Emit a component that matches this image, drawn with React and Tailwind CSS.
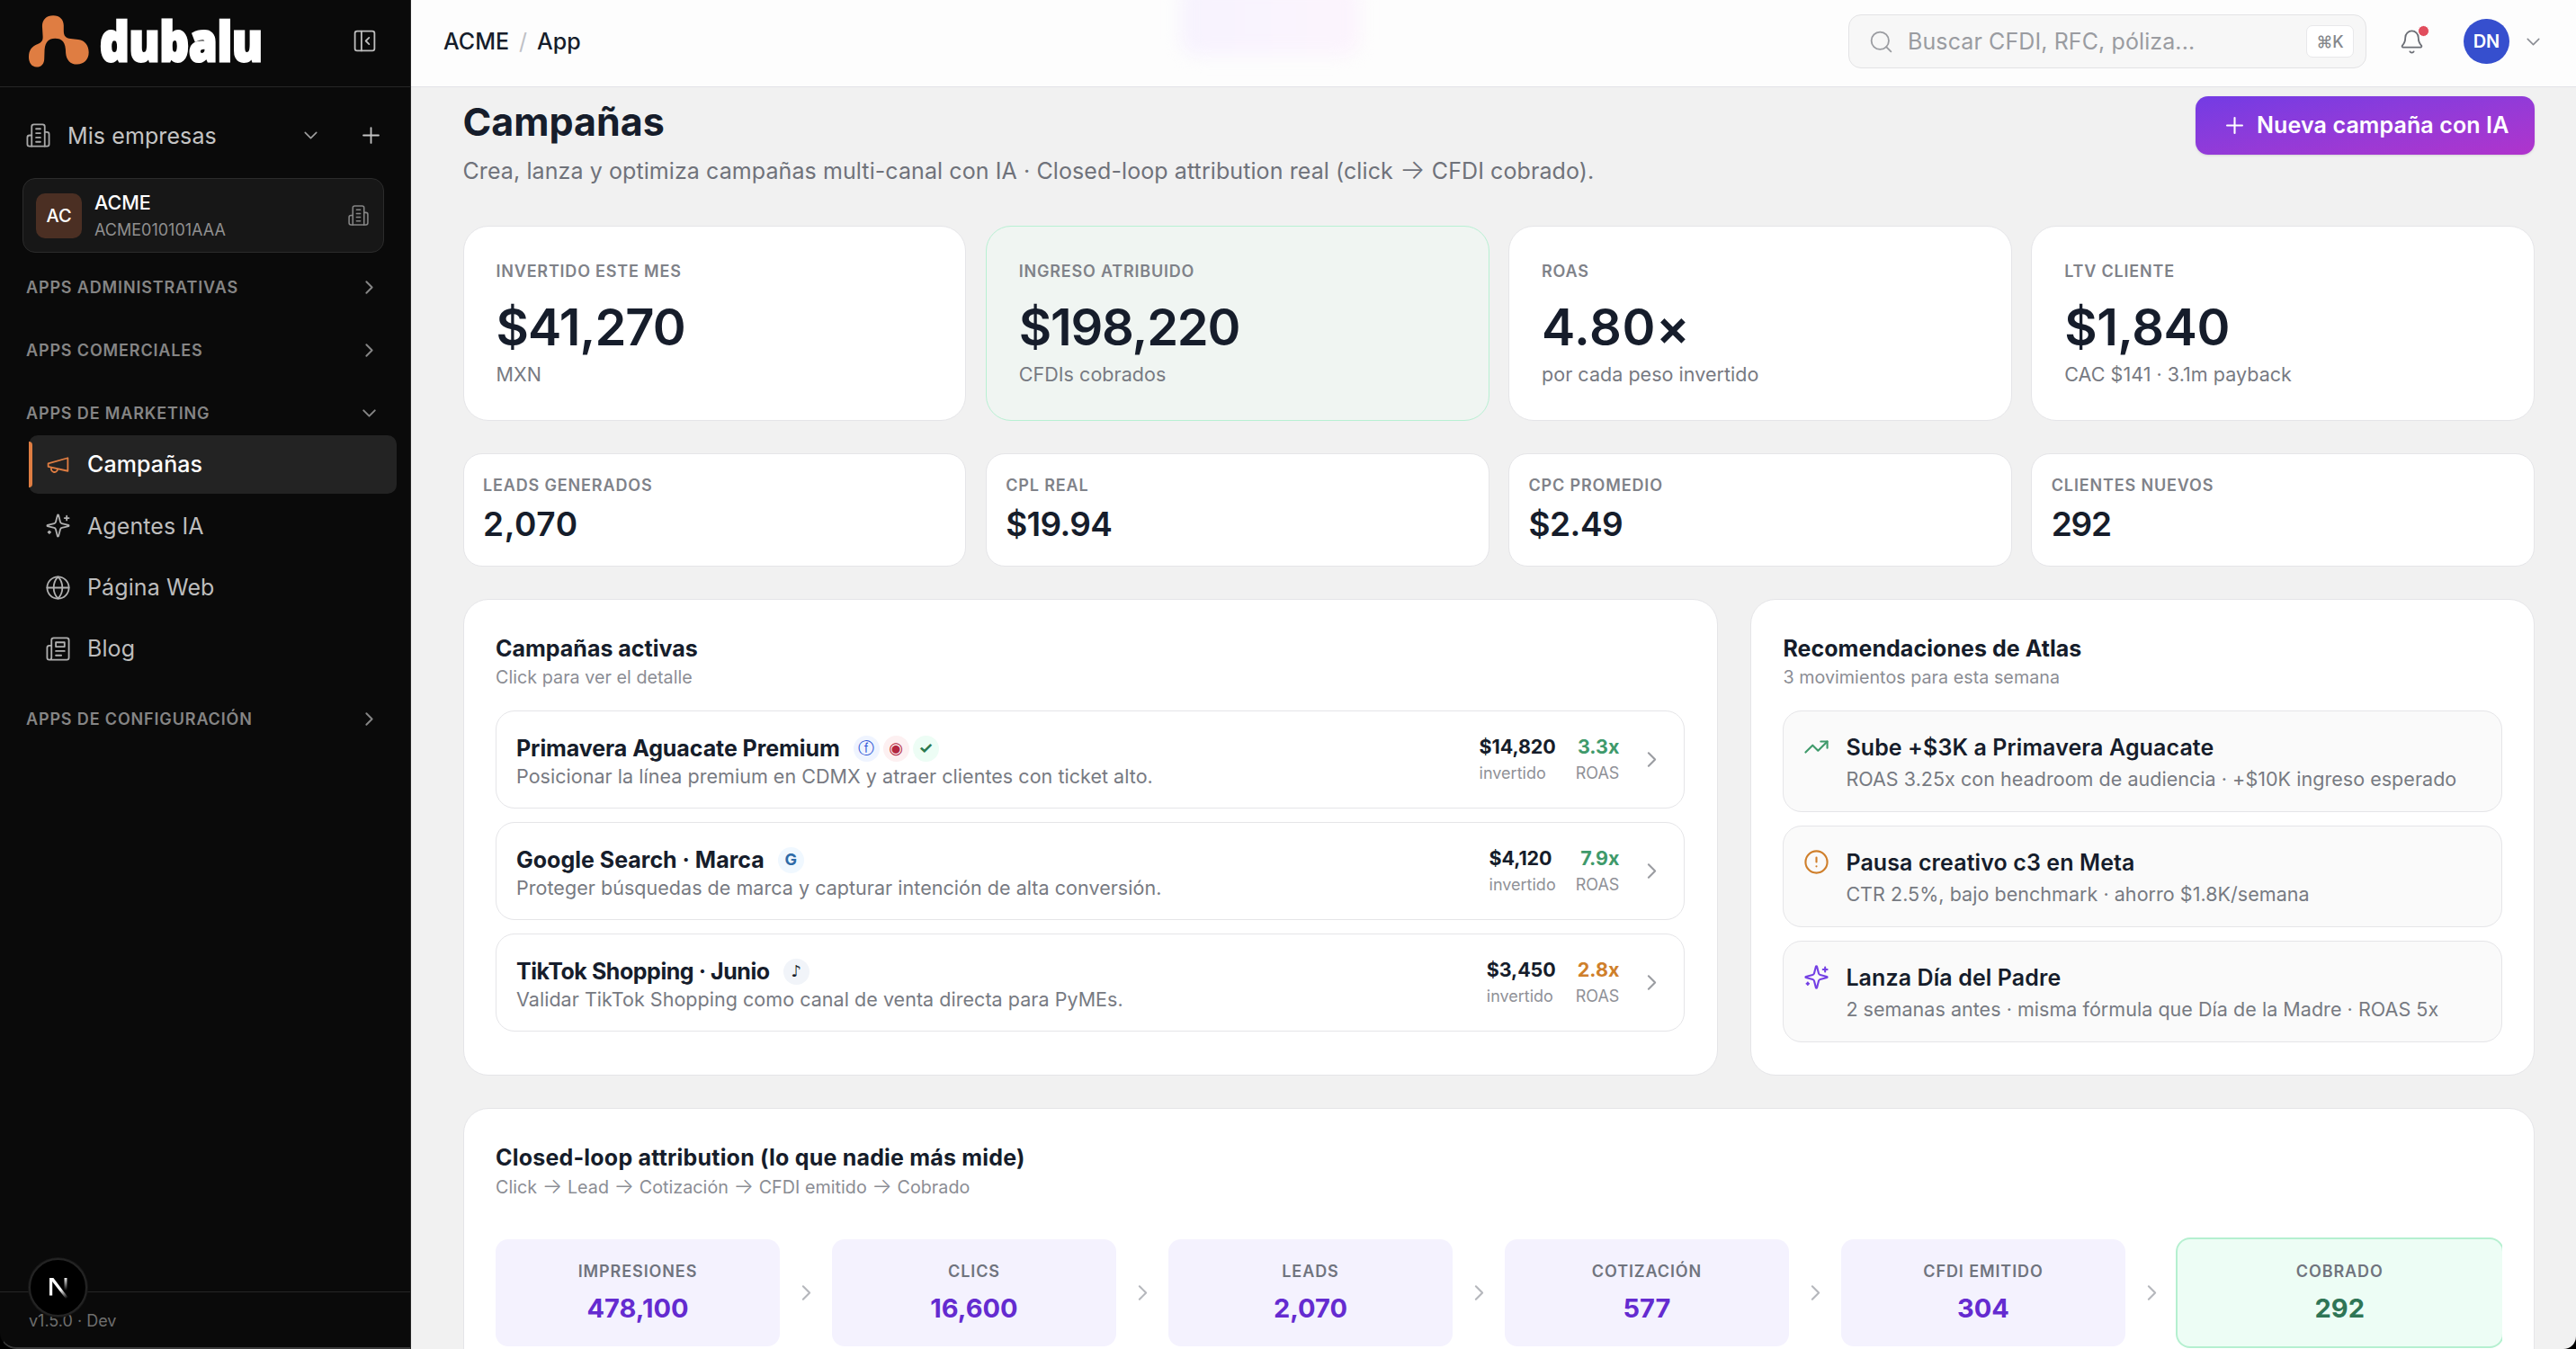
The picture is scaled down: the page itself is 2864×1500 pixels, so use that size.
import { Bell, ChevronDown, ChevronRight, CircleAlert, Globe, Plus, Search, TrendingUp } from 'lucide-react';

/* Icons */
function Icon({ children, className, strokeWidth = 1.5 }) {
  return (
    <svg
      viewBox="0 0 24 24"
      fill="none"
      stroke="currentColor"
      strokeWidth={strokeWidth}
      strokeLinecap="round"
      strokeLinejoin="round"
      className={className}
    >
      {children}
    </svg>
  );
}

function BuildingIcon(props) {
  return (
    <Icon {...props}>
      <path d="M6 22V4a2 2 0 0 1 2-2h8a2 2 0 0 1 2 2v18Z" />
      <path d="M6 12H4a2 2 0 0 0-2 2v6a2 2 0 0 0 2 2h2" />
      <path d="M18 9h2a2 2 0 0 1 2 2v9a2 2 0 0 1-2 2h-2" />
      <path d="M10 6h4M10 10h4M10 14h4M10 18h4" />
    </Icon>
  );
}

function MegaphoneIcon(props) {
  return (
    <Icon {...props}>
      <path d="m3 11 18-5v12L3 14v-3z" />
      <path d="M11.6 16.8a3 3 0 1 1-5.8-1.6" />
    </Icon>
  );
}

function SparklesIcon(props) {
  return (
    <Icon {...props}>
      <path d="M9.937 15.5A2 2 0 0 0 8.5 14.063l-6.135-1.582a.5.5 0 0 1 0-.962L8.5 9.936A2 2 0 0 0 9.937 8.5l1.582-6.135a.5.5 0 0 1 .963 0L14.063 8.5A2 2 0 0 0 15.5 9.937l6.135 1.581a.5.5 0 0 1 0 .964L15.5 14.063a2 2 0 0 0-1.437 1.437l-1.582 6.135a.5.5 0 0 1-.963 0z" />
      <path d="M20 3v4M22 5h-4M4 17v2M5 18H3" />
    </Icon>
  );
}

function NewspaperIcon(props) {
  return (
    <Icon {...props}>
      <path d="M4 22h16a2 2 0 0 0 2-2V4a2 2 0 0 0-2-2H8a2 2 0 0 0-2 2v16a2 2 0 0 1-2 2Zm0 0a2 2 0 0 1-2-2v-9c0-1.1.9-2 2-2h2" />
      <path d="M18 14h-8M15 18h-5M10 6h8v4h-8V6Z" />
    </Icon>
  );
}

function PanelCloseIcon(props) {
  return (
    <Icon {...props}>
      <rect width="18" height="18" x="3" y="3" rx="2" />
      <path d="M9 3v18M16 15l-3-3 3-3" />
    </Icon>
  );
}

function Logo() {
  return (
    <div className="flex items-start">
      <svg viewBox="36 36 202 174" className="mt-[17px] h-[58px] w-[67px]">
        <path
          fill="#df7d42"
          d="M118 36C140 36 153 50 153 70V88C153 104 160 112 176 114L202 117C225 120 237 138 237 160C237 185 220 200 198 200C175 200 162 185 160 162C160 125 148 113 124 113C102 113 92 125 89 150L88 180C88 198 78 209 62 209C46 209 36 195 36 176C36 152 46 140 66 132C80 126 84 120 83 105L81 72C81 50 95 36 118 36Z"
        />
      </svg>
      <svg className="ml-[9px] h-[92px] w-[240px] overflow-visible">
        <text
          x="3"
          y="68"
          textLength="181"
          lengthAdjust="spacingAndGlyphs"
          fill="#fff"
          stroke="#fff"
          strokeWidth="3"
          className="font-['Open_Sans'] text-[61px] font-extrabold"
        >
          dubalu
        </text>
      </svg>
    </div>
  );
}

/* Sidebar */
const marketingApps = [
  { name: 'Campañas', icon: MegaphoneIcon, active: true },
  { name: 'Agentes IA', icon: SparklesIcon },
  { name: 'Página Web', icon: Globe },
  { name: 'Blog', icon: NewspaperIcon },
];

function SectionHeader({ children, open, className }) {
  const Chevron = open ? ChevronDown : ChevronRight;
  return (
    <div className={`flex h-12 items-center justify-between pr-[33px] pl-[29px] text-[#858585] ${className}`}>
      <span className="text-[18px] font-semibold tracking-[0.85px]">{children}</span>
      <Chevron className="h-[25px] w-[25px]" strokeWidth={1.9} />
    </div>
  );
}

function Sidebar() {
  return (
    <aside className="relative flex w-[457px] shrink-0 flex-col overflow-hidden rounded-bl-[18px] border-r border-[#262626] bg-[#0a0a0a]">
      <div className="flex h-[97px] shrink-0 items-start border-b border-[#262626] pl-[32px]">
        <Logo />
        <PanelCloseIcon className="ml-[43px] mt-[31px] h-[29px] w-[29px] text-[#bdbdbd]" />
      </div>

      <div className="mt-[21px] flex h-[65px] items-center pr-[29px] pl-[28px] text-[#c4c4c4]">
        <BuildingIcon className="h-[29px] w-[29px] text-[#a8a8a8]" />
        <span className="mt-[2px] ml-[18px] flex-1 text-[25px] tracking-[0.1px]">Mis empresas</span>
        <ChevronDown className="h-[25px] w-[25px] text-[#a0a0a0]" strokeWidth={1.5} />
        <Plus className="ml-[40px] h-[29px] w-[29px]" strokeWidth={1.5} />
      </div>

      <div className="mt-[15px] ml-[25px] flex h-[83px] w-[402px] items-center rounded-[14px] border border-[#2c2c2c] bg-[#171717] pr-[15px] pl-[14px]">
        <div className="flex h-[50px] w-[51px] items-center justify-center rounded-[10px] bg-[#4b2f23] text-[20px] font-medium text-white">
          AC
        </div>
        <div className="ml-[14px] flex-1">
          <div className="mt-[2px] text-[21.5px] leading-[30px] font-medium text-white">ACME</div>
          <div className="text-[18px] leading-[31px] text-[#8f8f8f]">ACME010101AAA</div>
        </div>
        <BuildingIcon className="h-[25px] w-[25px] text-[#858585]" />
      </div>

      <SectionHeader className="mt-[14px]">APPS ADMINISTRATIVAS</SectionHeader>
      <SectionHeader className="mt-[22px]">APPS COMERCIALES</SectionHeader>
      <SectionHeader className="mt-[22px]" open>APPS DE MARKETING</SectionHeader>

      <nav className="mt-px mr-[15px] ml-[32px] flex flex-col gap-[3.4px]">
        {marketingApps.map(({ name, icon: ItemIcon, active }) => (
          <div
            key={name}
            className={`relative flex h-[65px] items-center rounded-[10px] pl-[18px] text-[25px] tracking-[0.1px] ${
              active ? 'bg-[#232323] font-medium text-white' : 'text-[#bdbdbd]'
            }`}
          >
            {active && <span className="absolute left-0 h-[51px] w-1 rounded-r bg-[#df7d42]" />}
            <ItemIcon
              className={`h-[29px] w-[29px] ${active ? 'text-[#df7d42]' : 'text-[#b0b0b0]'}`}
              strokeWidth={1.5}
            />
            <span className="mt-px ml-[18px]">{name}</span>
          </div>
        ))}
      </nav>

      <SectionHeader className="mt-[21px]">APPS DE CONFIGURACIÓN</SectionHeader>

      <div className="mt-auto h-[64px] border-t border-[#262626] pt-[17px] pl-[32px] text-[18px] leading-[30px] text-[#6e6e6e]">
        v1.5.0 · Dev
      </div>
      <div className="absolute inset-x-0 bottom-0 h-[30px] rounded-bl-[18px] border-b-2 border-l border-[#3a3a3a] border-l-transparent" />

      {/* Dev tools badge */}
      <div className="absolute bottom-[36px] left-[32px] flex h-[65px] w-[65px] items-center justify-center rounded-full border-2 border-[#242424] bg-black shadow-[0_0_0_1px_#171717]">
        <svg viewBox="0 0 24 28" className="h-[28px] w-[24px]" fill="none">
          <defs>
            <linearGradient id="diag" x1="14" y1="16" x2="21" y2="26" gradientUnits="userSpaceOnUse">
              <stop stopColor="#fff" />
              <stop offset="1" stopColor="#fff" stopOpacity="0" />
            </linearGradient>
            <linearGradient id="stem" x1="0" y1="2" x2="0" y2="17" gradientUnits="userSpaceOnUse">
              <stop stopColor="#fff" />
              <stop offset="1" stopColor="#fff" stopOpacity="0" />
            </linearGradient>
          </defs>
          <path d="M2 3h4.4L23 25l-2.2 2L2 3Z" fill="url(#diag)" />
          <path d="M3.6 22.5V3" stroke="#fff" strokeWidth="3.2" />
          <rect x="18.5" y="3" width="3" height="14" fill="url(#stem)" />
        </svg>
      </div>
    </aside>
  );
}

/* Top bar */
function Header() {
  return (
    <header className="relative flex h-[97px] shrink-0 items-center justify-between overflow-hidden border-b border-[#e3e3e8] bg-[#fdfdfd] pr-[35px] pb-[4px] pl-[36px]">
      <div className="absolute top-[-20px] left-[855px] h-[82px] w-[200px] rounded-[20px] bg-linear-to-r from-[#f7f3fe] to-[#fcf4fd] blur-[9px]" />
      <div className="mt-[2px] flex items-center text-[25px] font-medium text-[#161d2b]">
        <span>ACME</span>
        <span className="mx-[11px] font-normal text-[#bfc1c6]">/</span>
        <span>App</span>
      </div>
      <div className="flex items-center">
        <div className="flex h-[60px] w-[576px] items-center rounded-[14px] border border-[#e3e3e5] bg-[#f7f7f7] pr-[13px] pl-[21px] text-[#9a9ca1]">
          <Search className="h-[29px] w-[29px]" strokeWidth={1.5} />
          <span className="mt-[2px] ml-[15px] flex-1 text-[25px] tracking-[0.1px]">Buscar CFDI, RFC, póliza...</span>
          <kbd className="flex h-[36px] w-[53px] items-center justify-center rounded-[7px] border border-[#e8e8ea] bg-white font-[Inter] text-[18px] font-medium text-[#85878c]">
            ⌘K
          </kbd>
        </div>
        <div className="relative ml-[36px]">
          <Bell className="h-[29px] w-[29px] text-[#6b6e75]" strokeWidth={1.5} />
          <span className="absolute -top-[4px] left-[21px] h-[13px] w-[13px] rounded-full border border-white bg-[#e14d5d]" />
        </div>
        <div className="ml-[43px] flex h-[50px] w-[51px] items-center justify-center rounded-full bg-[#364fce] text-[20px] font-semibold text-white">
          DN
        </div>
        <ChevronDown className="ml-[14px] h-[25px] w-[25px] text-[#8b8d94]" strokeWidth={1.5} />
      </div>
    </header>
  );
}

/* Metrics */
const mainKpis = [
  { label: 'INVERTIDO ESTE MES', value: '$41,270', note: 'MXN', tracking: 'tracking-[-0.9px]' },
  {
    label: 'INGRESO ATRIBUIDO',
    value: '$198,220',
    note: 'CFDIs cobrados',
    tracking: 'tracking-[-1.2px]',
    highlight: true,
  },
  { label: 'ROAS', value: '4.80×', note: 'por cada peso invertido', tracking: 'tracking-[0.6px]' },
  { label: 'LTV CLIENTE', value: '$1,840', note: 'CAC $141 · 3.1m payback', tracking: 'tracking-[-0.5px]' },
];

const miniKpis = [
  { label: 'LEADS GENERADOS', value: '2,070', tracking: 'tracking-[0.6px]' },
  { label: 'CPL REAL', value: '$19.94', tracking: 'tracking-[-0.7px]' },
  { label: 'CPC PROMEDIO', value: '$2.49', tracking: 'tracking-[-0.5px]' },
  { label: 'CLIENTES NUEVOS', value: '292', tracking: 'tracking-[-1.2px]' },
];

function KpiCard({ label, value, note, tracking, highlight }) {
  return (
    <div
      className={`h-[217px] rounded-[28px] border px-[36px] pt-[35px] ${
        highlight ? 'border-[#b8f0d3] bg-[#f0f5f2]' : 'border-[#e5e5e8] bg-white'
      }`}
    >
      <div className="text-[18px] leading-[29px] font-semibold tracking-[0.8px] text-[#7f8289]">{label}</div>
      <div className={`mt-[16px] text-[56px] leading-[64px] font-semibold text-[#161d2b] ${tracking}`}>{value}</div>
      <div className="mt-[4px] text-[21.5px] leading-[32px] tracking-[0.04px] text-[#777a82]">{note}</div>
    </div>
  );
}

function MiniKpi({ label, value, tracking }) {
  return (
    <div className="h-[126px] rounded-[21px] border border-[#e5e5e8] bg-white px-[21.5px] pt-[21px]">
      <div className="text-[18px] leading-[27px] font-semibold tracking-[0.85px] text-[#7f8289]">{label}</div>
      <div className={`mt-[5px] text-[37px] leading-[50px] font-semibold text-[#161d2b] ${tracking}`}>{value}</div>
    </div>
  );
}

/* Panels */
function Arrow() {
  return <span className="text-[1.2em] leading-none font-light">→</span>;
}

function Panel({ title, subtitle, tracking, className, children }) {
  return (
    <section className={`rounded-[28px] border border-[#e5e5e8] bg-white px-[35.5px] pt-[35px] ${className}`}>
      <h2 className={`text-[25px] leading-[39px] font-bold text-[#161d2b] ${tracking}`}>{title}</h2>
      <p className="h-[24px] text-[19.7px] leading-[24px] tracking-[0.04px] text-[#8b8d94]">{subtitle}</p>
      {children}
    </section>
  );
}

const campaigns = [
  {
    name: 'Primavera Aguacate Premium',
    tracking: 'tracking-[-0.08px]',
    goal: 'Posicionar la línea premium en CDMX y atraer clientes con ticket alto.',
    channels: ['meta', 'instagram', 'whatsapp'],
    spent: '$14,820',
    roas: '3.3x',
    roasColor: 'text-[#3f9a6b]',
  },
  {
    name: 'Google Search · Marca',
    tracking: 'tracking-normal',
    goal: 'Proteger búsquedas de marca y capturar intención de alta conversión.',
    channels: ['google'],
    spent: '$4,120',
    roas: '7.9x',
    roasColor: 'text-[#3f9a6b]',
  },
  {
    name: 'TikTok Shopping · Junio',
    tracking: 'tracking-[-0.45px]',
    goal: 'Validar TikTok Shopping como canal de venta directa para PyMEs.',
    channels: ['tiktok'],
    spent: '$3,450',
    roas: '2.8x',
    roasColor: 'text-[#cf7f2b]',
  },
];

const channelBadges = {
  meta: { glyph: 'ⓕ', style: 'bg-[#eff4ff] text-[#2f57d6] font-normal' },
  instagram: { glyph: '◉', style: 'bg-[#fdf0f1] text-[#b3263f] font-normal' },
  whatsapp: { glyph: '✓', style: 'bg-[#edfdf5] text-[#2b7a50] font-bold' },
  google: { glyph: 'G', style: 'bg-[#f0f8ff] text-[#2f6ba8] font-bold' },
  tiktok: { glyph: '♪', style: 'bg-[#f1f4f9] text-[#161d2b] font-bold' },
};

function CampaignRow({ name, tracking, goal, channels, spent, roas, roasColor }) {
  return (
    <div className="flex h-[109px] items-center rounded-[21px] border border-[#e5e5e8] pr-[21px] pl-[22px]">
      <div className="flex-1 pt-[3px]">
        <div className="flex h-[36px] items-center">
          <span className={`text-[25px] font-bold text-[#161d2b] ${tracking}`}>{name}</span>
          <div className="ml-[15px] flex gap-[4px]">
            {channels.map((channel) => (
              <span
                key={channel}
                className={`-mt-[2px] flex h-[29px] w-[29px] items-center justify-center rounded-full font-[Inter,'DejaVu_Sans',sans-serif] text-[18px] leading-none ${channelBadges[channel].style}`}
              >
                {channelBadges[channel].glyph}
              </span>
            ))}
          </div>
        </div>
        <div className="-mt-[2px] text-[21.5px] leading-[28px] tracking-[0.04px] text-[#777a82]">{goal}</div>
      </div>
      <div>
        <div className="text-[21.5px] leading-[30px] font-bold tracking-[-0.1px] text-[#161d2b]">{spent}</div>
        <div className="text-[18px] leading-[30px] text-[#8f9197]">invertido</div>
      </div>
      <div className="ml-[22px] text-right">
        <div className={`text-[21.5px] leading-[30px] font-bold ${roasColor}`}>{roas}</div>
        <div className="text-[18px] leading-[30px] text-[#8f9197]">ROAS</div>
      </div>
      <ChevronRight className="ml-[22px] h-[29px] w-[29px] text-[#9a9ca1]" strokeWidth={1.75} />
    </div>
  );
}

const recommendations = [
  {
    title: 'Sube +$3K a Primavera Aguacate',
    detail: 'ROAS 3.25x con headroom de audiencia · +$10K ingreso esperado',
    icon: TrendingUp,
    color: 'text-[#3f9a6b]',
  },
  {
    title: 'Pausa creativo c3 en Meta',
    detail: 'CTR 2.5%, bajo benchmark · ahorro $1.8K/semana',
    icon: CircleAlert,
    color: 'text-[#cf7f2b]',
  },
  {
    title: 'Lanza Día del Padre',
    detail: '2 semanas antes · misma fórmula que Día de la Madre · ROAS 5x',
    icon: SparklesIcon,
    color: 'text-[#7440e4]',
  },
];

function Recommendation({ title, detail, icon: RecIcon, color }) {
  return (
    <div className="flex h-[113px] items-start rounded-[21px] border border-[#e5e5e8] bg-[#fafafa] px-[22px] pt-[22px]">
      <RecIcon className={`mt-[3px] h-[29px] w-[29px] ${color}`} strokeWidth={1.75} />
      <div className="ml-[18px]">
        <div className="pt-px text-[25px] leading-[35px] font-semibold tracking-[0.1px] text-[#161d2b]">{title}</div>
        <div className="mt-[3px] text-[21.5px] leading-[29px] tracking-[0.04px] text-[#777a82]">{detail}</div>
      </div>
    </div>
  );
}

const funnel = [
  { label: 'IMPRESIONES', value: '478,100' },
  { label: 'CLICS', value: '16,600' },
  { label: 'LEADS', value: '2,070' },
  { label: 'COTIZACIÓN', value: '577' },
  { label: 'CFDI EMITIDO', value: '304' },
  { label: 'COBRADO', value: '292', final: true },
];

function FunnelStep({ label, value, final }) {
  return (
    <>
      <div
        className={`h-[119px] rounded-[14px] pt-[22px] text-center ${
          final ? 'flex-1 bg-[#edfdf5] ring-2 ring-[#b5f0d0]' : 'w-[316px] bg-[#f4f2fe]'
        }`}
      >
        <div className="text-[18px] leading-[27px] font-semibold tracking-[0.9px] text-[#70747e]">{label}</div>
        <div className={`mt-[6px] text-[29px] leading-[43px] font-bold ${final ? 'text-[#2f7556]' : 'text-[#642bd0]'}`}>
          {value}
        </div>
      </div>
      {!final && (
        <div className="flex w-[58px] items-center justify-center">
          <ChevronRight className="h-[29px] w-[29px] text-[#b5b7bc]" strokeWidth={1.75} />
        </div>
      )}
    </>
  );
}

export default function App() {
  return (
    <div className="flex h-[1500px] w-[2864px] overflow-hidden bg-black font-[Inter,sans-serif]">
      <Sidebar />
      <div className="flex min-w-0 flex-1 flex-col overflow-hidden rounded-br-[14px] bg-[#f1f1f1]">
        <Header />
        <main className="min-h-0 flex-1 overflow-hidden pt-[10px] pr-[46px] pl-[57.5px]">
          <div className="flex items-start justify-between">
            <div>
              <h1 className="text-[43px] leading-[57px] font-bold text-[#161d2b]">Campañas</h1>
              <p className="mt-[8px] h-[36px] text-[25px] leading-[36px] tracking-[0.09px] text-[#6f727a]">
                Crea, lanza y optimiza campañas multi-canal con IA · Closed-loop attribution real (click <Arrow /> CFDI
                cobrado).
              </p>
            </div>
            <button className="flex h-[65px] w-[377px] items-center rounded-[14px] bg-linear-to-br from-[#733be4] to-[#b033cc] pl-[29px] text-[25px] font-semibold tracking-[0.12px] text-white shadow-sm">
              <Plus className="h-[29px] w-[29px]" strokeWidth={1.75} />
              <span className="mt-px ml-[10px]">Nueva campaña con IA</span>
            </button>
          </div>

          <div className="mt-[43px] grid grid-cols-4 gap-[21.5px]">
            {mainKpis.map((kpi) => (
              <KpiCard key={kpi.label} {...kpi} />
            ))}
          </div>

          <div className="mt-[36px] grid grid-cols-4 gap-[21.5px]">
            {miniKpis.map((kpi) => (
              <MiniKpi key={kpi.label} {...kpi} />
            ))}
          </div>

          <div className="mt-[36px] grid grid-cols-[1.6fr_1fr] gap-[36px]">
            <Panel
              title="Campañas activas"
              subtitle="Click para ver el detalle"
              tracking="tracking-normal"
              className="h-[530px]"
            >
              <div className="mt-[25px] flex flex-col gap-[15px]">
                {campaigns.map((campaign) => (
                  <CampaignRow key={campaign.name} {...campaign} />
                ))}
              </div>
            </Panel>
            <Panel
              title="Recomendaciones de Atlas"
              subtitle="3 movimientos para esta semana"
              tracking="tracking-[0.05px]"
              className="h-[530px]"
            >
              <div className="mt-[25px] flex flex-col gap-[15px]">
                {recommendations.map((rec) => (
                  <Recommendation key={rec.title} {...rec} />
                ))}
              </div>
            </Panel>
          </div>

          <Panel
            title="Closed-loop attribution (lo que nadie más mide)"
            subtitle={
              <>
                Click <Arrow /> Lead <Arrow /> Cotización <Arrow /> CFDI emitido <Arrow /> Cobrado
              </>
            }
            tracking="tracking-[0.2px]"
            className="mt-[36px] h-[400px]"
          >
            <div className="mt-[44px] flex overflow-hidden py-[3px]">
              {funnel.map((step) => (
                <FunnelStep key={step.label} {...step} />
              ))}
            </div>
          </Panel>
        </main>
      </div>
    </div>
  );
}
